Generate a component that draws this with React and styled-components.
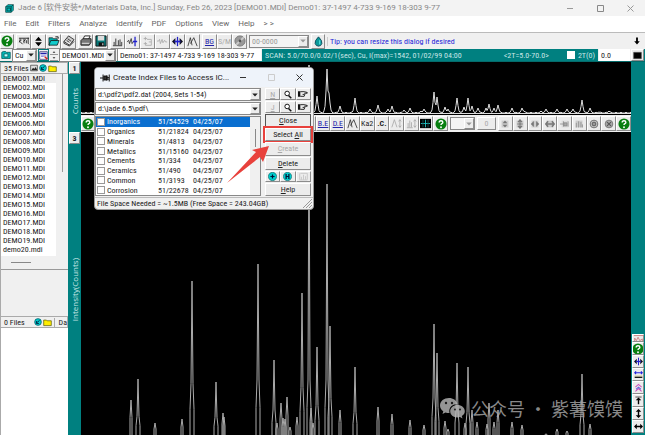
import React, { useState } from 'react'
import styled, { createGlobalStyle, css } from 'styled-components'

const MENU = ['File', 'Edit', 'Filters', 'Analyze', 'Identify', 'PDF', 'Options', 'View', 'Help', '> >']

const FILES = [...Array(19)].map((_, i) => `DEMO${String(i + 1).padStart(2, '0')}.MDI`).concat('demo20.mdi')

const SUBFILES = [
  ['Inorganics', '51/54529'],
  ['Organics', '51/21824'],
  ['Minerals', '51/4813'],
  ['Metallics', '51/15160'],
  ['Cements', '51/334'],
  ['Ceramics', '51/490'],
  ['Common', '51/3193'],
  ['Corrosion', '51/22678'],
]

// [x, height] in the chart's own units, measured from the baseline
const OVERVIEW = [
  [50, 4], [58, 6], [101, 8], [111, 16], [135, 5], [177, 18], [193, 10], [220, 16], [228, 48], [236, 17],
  [246, 44], [248, 20], [259, 7], [273, 3], [274, 15], [289, 4], [297, 8], [307, 4], [311, 7], [323, 3], [329, 5],
  [340, 2], [343, 4], [353, 21], [356, 16], [364, 6], [367, 4], [376, 15], [383, 6], [387, 15], [391, 7], [397, 5],
  [405, 5], [408, 9], [413, 5], [417, 8], [431, 5], [441, 5], [443, 2], [460, 2], [465, 4], [476, 4], [486, 4], [492, 4],
  [501, 13], [509, 5], [518, 1], [528, 2],
]

const PEAKS = [
  [50, 35], [57, 56], [74, 12], [101, 16], [111, 154], [135, 53], [142, 22], [143, 18], [177, 171], [193, 75],
  [196, 12], [200, 32], [202, 17], [204, 16], [206, 38], [209, 8], [216, 18], [221, 142], [228, 320], [230, 27], [232, 12], [236, 88],
  [246, 251], [249, 109], [259, 25], [274, 68], [297, 28], [311, 21], [329, 15], [343, 10], [353, 111], [356, 82],
  [364, 14], [367, 6], [376, 72], [384, 12], [387, 68], [391, 25], [396, 13], [406, 11], [408, 32], [413, 13], [417, 25],
  [431, 13], [441, 10], [465, 1], [476, 6], [486, 4], [501, 61], [509, 11],
]

function overviewPath() {
  const pts = []
  for (let x = 0; x <= 550; x++) {
    let h = (x * 7) % 5 === 0 ? 1 : 0
    OVERVIEW.forEach(([px, ph]) => {
      const d = Math.abs(px - x)
      if (d < 4) h = Math.max(h, ph * [1, 0.5, 0.15, 0.05][d])
    })
    pts.push(`${x},${(51 - h).toFixed(1)}`)
  }
  return 'M' + pts.join('L')
}

// small peaks are plain spikes, tall ones split into two flanks near the foot
const peakPath = PEAKS.map(([x, h]) => {
  if (h < 40) return `M${x - 1} 303V${303 - h / 2}L${x} ${303 - h}L${x + 1} ${303 - h / 2}V303`
  const foot = Math.min(h / 3, 55)
  return `M${x - 2} 303V${303 - foot * 0.5}L${x - 1} ${303 - foot}L${x} ${303 - h}L${x + 1} ${303 - foot}L${x + 2} ${303 - foot * 0.5}V303`
}).join('')

/* ---------- icons ---------- */

const SHAPES = {
  help: <><circle cx="6.5" cy="6.5" r="6" fill="#087f10" /><path d="M4.5 5q0-2 2-2t2 1.700q0 1-1 1.500t-1 1.500" fill="none" stroke="#fff" strokeWidth="1.500" /><circle cx="6.500" cy="10" r="1" fill="#fff" /></>,
  pat: <path d="M1 3.500h11M2.500 4l-1 4M4 5L2 7l3 3M6.500 4v5M6 7l2-2 1 1v3M11 3v6l1 1" fill="none" stroke="#222" />,
  updown: <path d="M6.500 1l4 4.500h-8zM6.500 12l4-4.500h-8z" fill="#000" />,
  open: <><path d="M1 3h4l1 1h4v2H4l-2 5H1z" fill="#0aa" stroke="#111" strokeWidth=".7" /><path d="M3 6h9l-2 5H1z" fill="#1cc" stroke="#111" strokeWidth=".8" /><path d="M8 2h3v2" fill="none" stroke="#111" /></>,
  book: <path d="M1 7l5-6 6 4-5 6zM1 7v2l6 3 5-5M5 4l4 3M4 6l3 2" fill="#ccc" stroke="#333" />,
  print: <><path d="M3 5l2-4h6L9 5z" fill="#fff" stroke="#222" /><path d="M1 6l2-2h9v4l-2 3H1z" fill="#777" stroke="#222" /><path d="M2 9h8" stroke="#eee" /></>,
  save: <><path d="M1 1h11v11H1z" fill="#067878" stroke="#111" /><path d="M3 1h7v5H3z" fill="#ddd" /><path d="M4 8h6v4H4z" fill="#111" /><path d="M8 9h1v2H8z" fill="#fff" /></>,
  bars: <path d="M1 11.500h11M2.500 11V7M4.500 11V3M7.500 11V5M9.500 11V4M11.500 11V7" fill="none" stroke="#222" />,
  trim: <><path d="M0 7l2-2 1 4 2-6 1 6 2-3" fill="none" stroke="#333" /><path d="M9.500 1v11M7 6.500h5" stroke="#22c" strokeWidth="1.500" /></>,
  cut: <path d="M2 3h4M4 1v4M6 4h5v7H4V7M2 9h4M8 7h3" fill="none" stroke="#aaa" />,
  wave: <path d="M0 6h2l1-2 1 5 2-5 1 4 2-3 1 2h2" fill="none" stroke="#aaa" />,
  center: <><path d="M0 6.500l4-4v8zM13 6.500l-4-4v8z" fill="#112" /><path d="M6.500 1v11" stroke="#22c" strokeWidth="1.500" /><path d="M3 6.500h7" stroke="#22c" strokeWidth="2" /></>,
  twin: <path d="M1 12L4 2l2 9M4 9l4-7 4 10" fill="none" stroke="#333" />,
  dots: <path d="M3 11l1-1M9 11l1-1" stroke="#222" />,
  reticle: <><path d="M0 1h13v11H0z" fill="#000" /><path d="M6.500 2v9M1 6.500h11" stroke="#2cc" /><path d="M3.500 2v9M9.500 2v9" stroke="#155" /></>,
  disc: <><circle cx="6.500" cy="6.500" r="5.500" fill="#999" stroke="#777" /><path d="M2.500 10.500l8-8" stroke="#ccc" strokeWidth="2" /><circle cx="6.500" cy="6.500" r="1.500" fill="#555" /></>,
  drop: <><path d="M6.500 1q5 5 4 8-1 3-4 3t-4-3q-1-3 4-8z" fill="#0a9a9a" stroke="#145" /><path d="M8 5v5" stroke="#7ff" /></>,
  scaleup: <path d="M1 11L4 2l3 9M10.500 2v9M9 4l1.500-2L12 4M9 9l1.500 2L12 9" fill="none" stroke="#aaa" />,
  scalebar: <path d="M1 11.500h7M2.500 11V6M4.500 11V3M6.500 11V5M10.500 2v9M9 4l1.500-2L12 4M9 9l1.500 2L12 9" fill="none" stroke="#aaa" />,
  gUpDown: <><path d="M2 2h9v9H2z" fill="#ccc" /><path d="M6.500 2l3 3.500h-6zM6.500 11l3-3.500h-6z" fill="#777" /></>,
  gVert: <><path d="M2 2h9v9H2z" fill="#ccc" /><path d="M6.500 1v11M3 6.500h7M4 4l2.500-3L9 4M4 9l2.500 3L9 9" fill="none" stroke="#777" strokeWidth="1.500" /></>,
  gHor: <><path d="M2 2h9v9H2z" fill="#ccc" /><path d="M1 6.500l4-4v8zM12 6.500l-4-4v8z" fill="#777" /></>,
  gWide: <><path d="M2 2h9v9H2z" fill="#ccc" /><path d="M1 6.500h11M4 3L1 6.500 4 10M9 3l3 3.500L9 10" fill="none" stroke="#777" strokeWidth="2" /></>,
  gPin: <><path d="M2 2h9v9H2z" fill="#ddd" /><path d="M0 6.500h4M4.500 3v7M5 5h4v4H5zM10.500 3v7" fill="#aaa" stroke="#888" /></>,
  gBars: <><path d="M2 2h9v9H2z" fill="#ccc" /><path d="M3 11V5M6 11V3M9 11V4M11 11V7" stroke="#888" /></>,
  target: <><circle cx="6.500" cy="6.500" r="5" fill="#ccc" stroke="#555" /><circle cx="6.500" cy="6.500" r="2.500" fill="#999" stroke="#444" /></>,
  cancel: <><circle cx="6.500" cy="6.500" r="5" fill="#aaa" stroke="#666" /><path d="M4 4l5 5M9 4l-5 5" stroke="#555" strokeWidth="1.500" /></>,
  cube: <><path d="M1 4l3-3h8v8l-3 3H1z" fill="#0bb" stroke="#033" /><path d="M3 6h5v4H3zM9 4v8M1 4h8l3-3" fill="none" stroke="#033" /></>,
  tealbox: <><path d="M1 3l2-1h3l1 1h5v8H1z" fill="#0bb" stroke="#055" /><path d="M4 5h5v4H4z" fill="#bff" stroke="#055" /></>,
  list: <><path d="M1 1h11v11H1z" fill="#fff" stroke="#226" /><path d="M2 3.500h9" stroke="#22a" strokeWidth="2" /><path d="M3 6h7M3 8h4" stroke="#55c" /><path d="M8 8l4 4" stroke="#c22" strokeWidth="2" /></>,
  picture: <><path d="M1 2h11v9H1z" fill="#ddd" stroke="#222" /><path d="M2 10l3-4 2 2 2-3 3 5z" fill="#222" /></>,
  check: <><circle cx="6.500" cy="6.500" r="5.500" fill="#0cc" stroke="#045" /><path d="M4 8l5-4M4 5v4h4" fill="none" stroke="#024" strokeWidth="1.500" /></>,
  folder: <path d="M1 3h4l1 1h6v7H1z" fill="#fe0" stroke="#550" />,
  pin: <><path d="M0 6.500h4" stroke="#111" strokeWidth="1.500" /><path d="M4 2v9M5 4h4v5H5zM9 3v7M12 2v9M9 6h3M9 8h3" fill="#333" stroke="#111" strokeWidth="1.300" /></>,
  find: <><circle cx="6" cy="5" r="3.300" fill="#fff" stroke="#111" strokeWidth="1.400" /><path d="M8 8l4 4" stroke="#111" strokeWidth="2.200" /></>,
  hand: <><path d="M0 3h3v7H0z" fill="#111" /><path d="M3 3.500h5l4 1v1H8M3 9.500h5l1-3M8 7H6" fill="#fff" stroke="#111" strokeWidth="1.200" /></>,
  plus: <><circle cx="6.500" cy="6.500" r="6" fill="#0cc" stroke="#044" strokeWidth=".7" /><path d="M3.500 6.500h6M6.500 3.500v6" stroke="#013" strokeWidth="1.800" /></>,
  halt: <><circle cx="6.500" cy="6.500" r="6" fill="#0cc" stroke="#044" strokeWidth=".7" /><path d="M4.500 3v7M8.500 3v7M4 6.500h5" stroke="#013" strokeWidth="1.800" /></>,
  chart: <path d="M1 11.500h11M1 2v9M3.500 11V7M6.500 11V4M9.500 11V6M12 11V2H2" fill="none" stroke="#bbb" />,
  down: <path d="M5 1h3v6h3l-4.500 5L2 7h3z" fill="#000" />,
  screen: <path d="M1 2h11v9H1z" fill="#000" stroke="#444" />,
  redline: <path d="M1 3h11M2 10V6l2 3 2-4 2 4 3-2v3z" fill="none" stroke="#c77" />,
  spread: <><path d="M1 4h11M3 2L1 4l2 2M10 2l2 2-2 2" fill="none" stroke="#22d" strokeWidth="1.500" /><path d="M1 10.500h11" stroke="#111" strokeWidth="2" /><path d="M1 8.500h11" stroke="#cc8" /></>,
  chevrons: <><path d="M2 6l4.500-4L11 6M2 12l4.500-4 4.500 4" fill="none" stroke="#c5b" strokeWidth="1.500" /><path d="M3 9l3.500-3L10 9" fill="none" stroke="#66d" strokeWidth="1.500" /></>,
  top: <><path d="M2 1.500h9" stroke="#111" /><path d="M6.500 2l4 4h-3v6h-2V6h-3z" fill="#000" /></>,
  vert: <path d="M6.500 0l4 4h-3v5h3l-4 4-4-4h3V4h-3z" fill="#000" />,
  horiz: <path d="M0 6.500l4-4v3h5v-3l4 4-4 4v-3H4v3z" fill="#000" />,
  arrow: <path d="M2 4h9l-4.500 5z" fill="currentColor" />,
}

const IconSvg = styled.svg`
  display: block;
  flex: none;
  width: ${p => p.$size}px;
  height: ${p => p.$size}px;
`

function Icon({ name, size = 11 }) {
  return <IconSvg $size={size} viewBox="0 0 13 13" aria-hidden="true">{SHAPES[name]}</IconSvg>
}

/* ---------- app ---------- */

function Combo({ label, value, width, disabled }) {
  return (
    <ComboBox $width={width} $disabled={disabled}>
      <select aria-label={label} disabled={disabled}>
        <option>{value}</option>
      </select>
      <ComboArrow><Icon name="arrow" size={8} /></ComboArrow>
    </ComboBox>
  )
}

function Tool({ name, text, blue, off, size }) {
  return (
    <ToolButton aria-label={name} disabled={off} $blue={blue}>
      {text || <Icon name={name} size={size} />}
    </ToolButton>
  )
}

function WindowButtons({ color, maxColor }) {
  return (
    <>
      <WindowButton aria-label="Minimize"><svg width="6" height="7"><path d="M0 3.500h6" stroke={color} /></svg></WindowButton>
      <WindowButton aria-label="Maximize"><svg width="7" height="7"><path d="M.5.5h6v6h-6z" fill="none" stroke={maxColor} /></svg></WindowButton>
      <WindowButton aria-label="Close"><svg width="7" height="7"><path d="M.5.5l6 6M6.500.5l-6 6" stroke={color} /></svg></WindowButton>
    </>
  )
}

function Dialog() {
  const [checked, setChecked] = useState([])
  const toggle = (name) =>
    setChecked(checked.includes(name) ? checked.filter(c => c !== name) : [...checked, name])

  return (
    <DialogWindow role="dialog" aria-label="Create Index Files">
      <DialogTitle>
        <Icon name="pin" size={10} />
        <h2>Create Index Files to Access IC...</h2>
        <WindowButtons color="#333" maxColor="#ccc" />
      </DialogTitle>
      <DialogBody>
        <DialogMain>
          <Combo label="PDF file" value="d:\pdf2\pdf2.dat (2004, Sets 1-54)" />
          <Combo label="Index folder" value="d:\jade 6.5\pdf\" />
          <IndexFrame>
            <IndexList>
              <tbody>
                {SUBFILES.map(([name, count], i) => (
                  <IndexRow key={name} $active={i === 0}>
                    <td>
                      <label>
                        <Tick checked={checked.includes(name)} onChange={() => toggle(name)} />
                        <span>{name}</span>
                      </label>
                    </td>
                    <td>{count}</td>
                    <td>04/25/07</td>
                  </IndexRow>
                ))}
              </tbody>
            </IndexList>
            <IndexScroll><i /></IndexScroll>
          </IndexFrame>
        </DialogMain>
        <DialogSide>
          <ButtonTrio>
            <SideButton disabled><u>N</u></SideButton>
            <SideButton aria-label="Find file"><Icon name="find" size={9} /></SideButton>
            <SideButton aria-label="Browse file"><Icon name="hand" size={10} /></SideButton>
          </ButtonTrio>
          <ButtonTrio>
            <SideButton disabled><u>J</u></SideButton>
            <SideButton aria-label="Find folder"><Icon name="find" size={9} /></SideButton>
            <SideButton aria-label="Browse folder"><Icon name="hand" size={10} /></SideButton>
          </ButtonTrio>
          <SideButton $focus><u>C</u>lose</SideButton>
          <SideButton $marked>Select <u>A</u>ll</SideButton>
          <SideButton disabled><u>C</u>reate</SideButton>
          <SideButton><u>D</u>elete</SideButton>
          <ButtonTrio>
            <SideButton aria-label="Add"><Icon name="plus" size={9} /></SideButton>
            <SideButton aria-label="Stop"><Icon name="halt" size={9} /></SideButton>
            <SideButton aria-label="Chart" disabled><Icon name="chart" size={9} /></SideButton>
          </ButtonTrio>
          <SideButton><u>H</u>elp</SideButton>
        </DialogSide>
      </DialogBody>
      <DialogStatus>
        <span>File Space Needed = ~1.5MB (Free Space = 243.04GB)</span>
        <svg width="9" height="9"><path d="M0 9l9-9M3 9l6-6M6 9l3-3" stroke="#999" /></svg>
      </DialogStatus>
      <Pointer viewBox="0 0 44 40" aria-hidden="true">
        <path d="M1 38L30 7l-4-2L43 1l-6 16-3-5z" fill="#e8413c" />
      </Pointer>
    </DialogWindow>
  )
}

function App() {
  return (
    <Window>
      <Global />
      <TitleBar>
        <Icon name="cube" size={9} />
        <h1>Jade 6 [软件安装*/Materials Data, Inc.] Sunday, Feb 26, 2023 [DEMO01.MDI] Demo01: 37-1497 4-733 9-169 18-303 9-77</h1>
        <WindowButtons color="#999" maxColor="#888" />
      </TitleBar>

      <MenuBar>
        {MENU.map(m => <button key={m}>{m}</button>)}
      </MenuBar>

      <Toolbar>
        <ToolGroup $w={14}><Tool name="help" size={12} /></ToolGroup>
        <ToolGroup $w={60}>
          <Tool name="pat" size={12} />
          <Tool name="updown" />
          <Tool name="open" size={12} />
          <Tool name="book" size={12} />
        </ToolGroup>
        <ToolGroup $w={30}>
          <Tool name="print" size={12} />
          <Tool name="save" size={12} />
        </ToolGroup>
        <ToolGroup $w={90}>
          <Tool name="bars" />
          <Tool name="trim" />
          <Tool name="cut" off />
          <Tool name="wave" off />
          <Tool name="center" />
          <Tool name="twin" />
        </ToolGroup>
        <ToolGroup $w={45}>
          <Tool name="BG" text={<u>BG</u>} blue />
          <Tool name="S/M" text="S/M" off />
          <Tool name="disc" size={12} off />
        </ToolGroup>
        <Combo label="PDF number" value="00-0000" width={60} disabled />
        <ToolGroup $w={14}><Tool name="drop" /></ToolGroup>
        <Tip>Tip: you can resize this dialog if desired</Tip>
        <Icon name="down" size={8} />
      </Toolbar>

      <ScanRow>
        <Icon name="tealbox" size={10} />
        <Combo label="Anode" value="Cu" width={25} />
        <ListButton aria-label="List"><Icon name="list" size={9} /></ListButton>
        <Spinner>
          <button aria-label="Previous"><Icon name="arrow" size={4} /></button>
          <button aria-label="Next"><Icon name="arrow" size={4} /></button>
        </Spinner>
        <Combo label="Scan file" value="DEMO01.MDI" width={57} />
        <ScanName aria-label="Scan title" defaultValue="Demo01: 37-1497 4-733 9-169 18-303 9-77" />
        <ScanInfo>
          <span>SCAN: 5.0/70.0/0.02/1(sec), Cu, I(max)=1542, 01/02/99 04:00</span>
          <ScanRange>&lt;2T=5.0-70.0&gt;</ScanRange>
          <label><Tick $bare />2T(0)</label>
        </ScanInfo>
        <Offset aria-label="2T(0) offset" defaultValue="0.0" />
        <ScreenCell><ToolButton aria-label="Screen"><Icon name="screen" size={9} /></ToolButton></ScreenCell>
      </ScanRow>

      <Workspace>
        <FilePanel>
          <PanelHeader>
            <span>35 Files</span>
            <Icon name="picture" size={8} />
            <Icon name="check" size={8} />
            <Icon name="folder" size={9} />
          </PanelHeader>
          <FileScroll>
            <ul>
              {FILES.map((f, i) => <FileItem key={f} $active={i === 0}>{f}</FileItem>)}
            </ul>
            <ScrollTrack><i /></ScrollTrack>
          </FileScroll>
          <HScroll><i /></HScroll>
          <EmptyPanel />
          <PanelHeader>
            <FileCount>0 Files</FileCount>
            <Icon name="check" size={8} />
            <Icon name="folder" size={9} />
            <DateCell>Da</DateCell>
          </PanelHeader>
          <BlankList />
        </FilePanel>

        <Axis>
          <AxisPart $h={70}>
            <AxisButton>1</AxisButton>
            <AxisLabel>Counts</AxisLabel>
          </AxisPart>
          <AxisPart>
            <AxisButton>3</AxisButton>
            <AxisLabel>Intensity(Counts)</AxisLabel>
          </AxisPart>
        </Axis>

        <Charts>
          <Overview viewBox="0 0 550 53" preserveAspectRatio="none">
            <path d={overviewPath()} fill="none" stroke="#ddd" />
            <path d="M0 51.500h550" stroke="#ddd" />
          </Overview>
          <ChartTools>
            <ToolGroup $w={14}><Tool name="help" size={12} /></ToolGroup>
            <ToolGroup $w={147} $end>
              <Tool name="dots" />
              <Tool name="B.E" text={<u>B.E</u>} blue />
              <Tool name="D.E" text={<u>D.E</u>} blue />
              <Tool name="twin" />
              <Tool name="Ka2" text="Ka2" />
              <Tool name="C" text={<b>.C.</b>} />
              <Tool name="scaleup" off />
              <Tool name="scalebar" off />
              <Tool name="reticle" />
              <Tool name="help" size={12} />
            </ToolGroup>
            <Combo label="Phase" value="" width={25} disabled />
            <NumberBox aria-label="Phase count" disabled defaultValue="0" />
            <ToolGroup $w={133}>
              {['gUpDown', 'gVert', 'gHor', 'gWide', 'gPin', 'gBars', 'target', 'cancel'].map(n => <Tool key={n} name={n} size={10} off />)}
              <Tool name="help" size={12} />
            </ToolGroup>
          </ChartTools>
          <Pattern viewBox="0 0 550 303" preserveAspectRatio="none">
            <path d={peakPath} fill="none" stroke="#aaa" />
          </Pattern>
          <Watermark>
            <svg width="25" height="21" viewBox="0 0 25 21" aria-hidden="true">
              <path d="M9 0C4 0 0 3 0 7.500c0 2.500 1.300 4.500 3.300 5.800L2.500 16l3-1.500q2 .6 4 .5C8.500 9.500 12 6 17.500 6 16.500 2.300 13 0 9 0z" />
              <path d="M17.500 7c-4 0-7.300 2.700-7.300 6.200s3.200 6.200 7.300 6.200q1.300 0 2.500-.4l2.500 1.400-.7-2.300c1.900-1.300 3-3 3-4.900 0-3.500-3.300-6.200-7.300-6.200z" />
              <g fill="#222"><circle cx="6" cy="5" r="1.200" /><circle cx="12" cy="5" r="1.200" /><circle cx="15" cy="11.500" r="1" /><circle cx="20" cy="11.500" r="1" /></g>
            </svg>
            公众号 · 紫薯馍馍
          </Watermark>
        </Charts>

        <RightRail>
          <Tool name="redline" />
          <Tool name="help" size={12} />
          <Tool name="center" size={9} />
          <Tool name="spread" size={9} />
          <Tool name="chevrons" size={9} />
          <Tool name="top" size={9} />
          <Tool name="vert" size={9} />
          <Tool name="horiz" size={9} />
        </RightRail>

        <Dialog />
      </Workspace>
    </Window>
  )
}

export default App

const small = css`
  font-family: "Roboto Condensed", Roboto, "Liberation Sans", sans-serif;
  font-size: 8px;
  line-height: 9px;
`
const raised = css`
  border: 1px solid;
  border-color: #fff #8c8c8c #8c8c8c #fff;
  background: #ececec;
`

const Global = createGlobalStyle`
* { box-sizing: border-box; }

body {
  margin: 0;
  background: #000;
  overflow: hidden;
}

button, input, select {
  margin: 0;
  padding: 0;
  border: 0;
  border-radius: 0;
  font: inherit;
  color: inherit;
  background: none;
  min-width: 0;
}
`

const Window = styled.div`
  ${small}
  display: flex;
  flex-direction: column;
  height: 100vh;
  color: #222;
  background: #f0f0f0;
`

const TitleBar = styled.header`
  display: flex;
  align-items: center;
  height: 16px;
  padding-left: 5px;
  background: #f3f3f3;

  h1 {
    flex: 1;
    margin: 0 0 0 4px;
    font: 400 8px/16px Roboto, "Noto Sans CJK SC", sans-serif;
    color: #888;
    white-space: nowrap;
  }
`

const WindowButton = styled.button`
  display: flex;
  align-items: center;
  justify-content: center;
  width: 30px;
  height: 16px;
`

const MenuBar = styled.nav`
  display: flex;
  gap: 9px;
  height: 16px;
  padding: 0 4px;
  background: #fff;
  font: 8px/16px Roboto, sans-serif;
  color: #666;
`

const Toolbar = styled.div`
  display: flex;
  align-items: center;
  gap: 2px;
  height: 17px;
  padding-right: 4px;
  border-top: 1px solid #bbb;
`

const ToolGroup = styled.div`
  display: flex;
  flex: none;
  width: ${p => p.$w}px;
  height: 15px;
  margin-left: ${p => (p.$end ? 'auto' : 0)};

  > button { flex: 1; }
`

const ToolButton = styled.button`
  ${raised}
  display: flex;
  align-items: center;
  justify-content: center;
  min-width: 0;
  color: ${p => (p.$blue ? '#22a' : p.disabled ? '#aaa' : '#222')};
`

const ComboBox = styled.div`
  display: flex;
  flex: none;
  width: ${p => (p.$width ? `${p.$width}px` : 'auto')};
  height: 13px;
  border: 1px solid #888;
  background: ${p => (p.$disabled ? '#f4f4f4' : '#fff')};
  color: ${p => (p.$disabled ? '#999' : '#222')};

  select {
    flex: 1;
    appearance: none;
    padding-left: 2px;
    opacity: 1;
    text-overflow: clip;
  }
`

const ComboArrow = styled.span`
  ${raised}
  display: flex;
  align-items: center;
  justify-content: center;
  width: 10px;
  pointer-events: none;
`

const Tip = styled.span`
  flex: 1;
  padding-left: 2px;
  border-left: 1px solid #ccc;
  color: #1c1cd8;
`

const ScanRow = styled.div`
  display: flex;
  align-items: center;
  gap: 1px;
  height: 13px;
  padding-left: 1px;
  border-bottom: 1px solid #056b6b;
`

const ListButton = styled.button`
  flex: none;
  display: flex;
  align-items: center;
  justify-content: center;
  width: 11px;
  height: 12px;
  border: 1px solid #077;
`

const Spinner = styled.div`
  flex: none;
  width: 8px;

  button {
    display: flex;
    align-items: center;
    justify-content: center;
    width: 8px;
    height: 6px;
    border-bottom: 1px solid #999;
  }
  button:first-child svg { transform: rotate(180deg); }
`

const ScanName = styled.input`
  flex: none;
  width: 144px;
  height: 12px;
  padding-left: 2px;
  background: #fff;
  border-left: 1px solid #888;
`

const ScanInfo = styled.div`
  display: flex;
  flex: 1;
  align-items: center;
  height: 12px;
  padding: 0 3px;
  background: #008080;
  color: #c8e6e6;

  label {
    display: flex;
    align-items: center;
    gap: 3px;
  }
`

const ScanRange = styled.span`
  margin: 0 18px 0 auto;
`

const Offset = styled.input`
  flex: none;
  width: 31px;
  height: 12px;
  padding-left: 2px;
  background: #fff;
`

const ScreenCell = styled.div`
  display: flex;
  flex: none;
  width: 14px;
  height: 12px;
  background: #008080;

  button { width: 13px; }
`

const Workspace = styled.main`
  position: relative;
  display: grid;
  grid-template-columns: 68px 13px 1fr 14px;
  flex: 1;
  min-height: 0;
`

const FilePanel = styled.aside`
  display: flex;
  flex-direction: column;
  min-height: 0;
  border-left: 1px solid #aaa;
`

const PanelHeader = styled.div`
  display: flex;
  flex: none;
  align-items: center;
  gap: 1px;
  height: 12px;
  padding-left: 3px;
  border: 1px solid #aaa;
  border-left: 0;
  overflow: hidden;
`

const FileScroll = styled.div`
  display: flex;
  height: 182px;

  ul {
    width: 55px;
    margin: 0;
    padding: 0;
    list-style: none;
    background: #fff;
  }
`

const FileItem = styled.li`
  padding-left: 2px;
  background: ${p => (p.$active ? '#eee' : 'none')};
`

const ScrollTrack = styled.div`
  display: flex;
  justify-content: center;
  flex: 1;

  i {
    width: 1px;
    height: 98px;
    background: #999;
  }
`

const HScroll = styled.div`
  display: flex;
  align-items: center;
  height: 14px;
  padding-left: 10px;
  border-bottom: 1px solid #999;

  i {
    width: 20px;
    height: 1px;
    background: #888;
  }
`

const EmptyPanel = styled.div`
  height: 46px;
`

const FileCount = styled.span`
  width: 31px;
`

const DateCell = styled.span`
  flex: none;
  margin-left: 1px;
  padding-left: 4px;
  border-left: 1px solid #aaa;
`

const BlankList = styled.div`
  flex: 1;
  background: #fff;
`

const Axis = styled.div`
  display: flex;
  flex-direction: column;
  background: #008080;
`

const AxisPart = styled.div`
  display: flex;
  flex-direction: column;
  align-items: center;
  ${p => (p.$h ? `height: ${p.$h}px; padding-bottom: 4px;` : 'flex: 1;')}
`

const AxisButton = styled.button`
  ${raised}
  flex: none;
  width: 11px;
  height: 12px;
  font-weight: 700;
`

const AxisLabel = styled.span`
  margin: auto;
  writing-mode: vertical-rl;
  transform: rotate(180deg);
  font: 8px/13px "Open Sans", sans-serif;
  color: #c8e6e6;
`

const Charts = styled.section`
  position: relative;
  display: flex;
  flex-direction: column;
  min-width: 0;
  background: #000;
`

const Overview = styled.svg`
  display: block;
  width: 100%;
  height: 53px;
`

const ChartTools = styled.div`
  display: flex;
  flex: none;
  align-items: center;
  gap: 2px;
  height: 17px;
  background: #f0f0f0;
`

const NumberBox = styled.input`
  ${raised}
  flex: none;
  width: 19px;
  height: 13px;
  text-align: center;
  color: #aaa;
`

const Pattern = styled.svg`
  display: block;
  flex: 1;
  width: 100%;
  min-height: 0;
`

const Watermark = styled.div`
  position: absolute;
  right: 8px;
  bottom: 14px;
  display: flex;
  align-items: center;
  gap: 6px;
  font: 18px/26px "Noto Sans CJK SC", sans-serif;
  color: #aaa;
  opacity: 0.8;

  svg { fill: #bbb; }
`

const RightRail = styled.aside`
  display: flex;
  flex-direction: column;
  justify-content: flex-end;
  padding: 0 1px 2px;
  background: #008080;

  button {
    height: 13px;
    overflow: hidden;
  }
  button:first-child { height: 8px; }
`

const DialogWindow = styled.section`
  position: absolute;
  left: 94px;
  top: 5px;
  width: 220px;
  border: 1px solid #999;
  border-radius: 4px;
  background: #f0f0f0;
  overflow: hidden;
`

const DialogTitle = styled.div`
  display: flex;
  align-items: center;
  height: 19px;
  padding-left: 5px;
  background: #eef3fa;

  h2 {
    flex: 1;
    margin: 0 0 0 3px;
    font: 400 8px/19px Roboto, sans-serif;
    color: #222;
    white-space: nowrap;
  }
`

const DialogBody = styled.div`
  display: flex;
  gap: 4px;
  height: 110px;
  padding: 1px 2px 1px 0;
`

const DialogMain = styled.div`
  display: flex;
  flex-direction: column;
  flex: 1;
  gap: 1px;
`

const IndexFrame = styled.div`
  display: flex;
  flex: 1;
  border: 1px solid #888;
  background: #fff;
`

const IndexList = styled.table`
  flex: 1;
  height: 78px;
  border-collapse: collapse;

  td { padding: 0; }
  td:nth-child(1) { width: 62px; }
  td:nth-child(2) { width: 35px; }
`

const IndexRow = styled.tr`
  td {
    background: ${p => (p.$active ? '#0a6fd0' : 'none')};
    color: ${p => (p.$active ? '#fff' : '#222')};
  }
  label {
    display: flex;
    align-items: center;
    gap: 2px;
    padding-left: 1px;
  }
`

const IndexScroll = styled.div`
  display: flex;
  align-items: flex-start;
  justify-content: center;
  width: 10px;
  padding-top: 12px;
  background: #f0f0f0;

  i {
    width: 1px;
    height: 18px;
    background: #888;
  }
`

const Tick = styled.input.attrs({ type: 'checkbox' })`
  appearance: none;
  flex: none;
  width: 8px;
  height: 8px;
  border: ${p => (p.$bare ? 0 : '1px solid #999')};
  background: #fff;

  &:checked { box-shadow: inset 0 0 0 2px #fff; background: #222; }
`

const DialogSide = styled.div`
  display: flex;
  flex-direction: column;
  gap: 1px;
  width: 46px;

  > * { flex: 1; }
`

const ButtonTrio = styled.div`
  display: flex;

  > button { flex: 1; }
`

const SideButton = styled.button`
  ${raised}
  min-height: 0;
  text-align: center;
  white-space: nowrap;
  color: ${p => (p.disabled ? '#aaa' : '#222')};
  ${p => p.$focus && 'border-color: #555;'}
  ${p => p.$marked && 'outline: 2px solid #e8413c;'}

  svg { margin: auto; }
`

const DialogStatus = styled.div`
  display: flex;
  align-items: flex-end;
  justify-content: space-between;
  height: 12px;
  padding: 0 1px 1px 2px;
  border-top: 1px solid #bbb;
`

const Pointer = styled.svg`
  position: absolute;
  left: 131px;
  top: 77px;
  width: 44px;
  height: 40px;
`
